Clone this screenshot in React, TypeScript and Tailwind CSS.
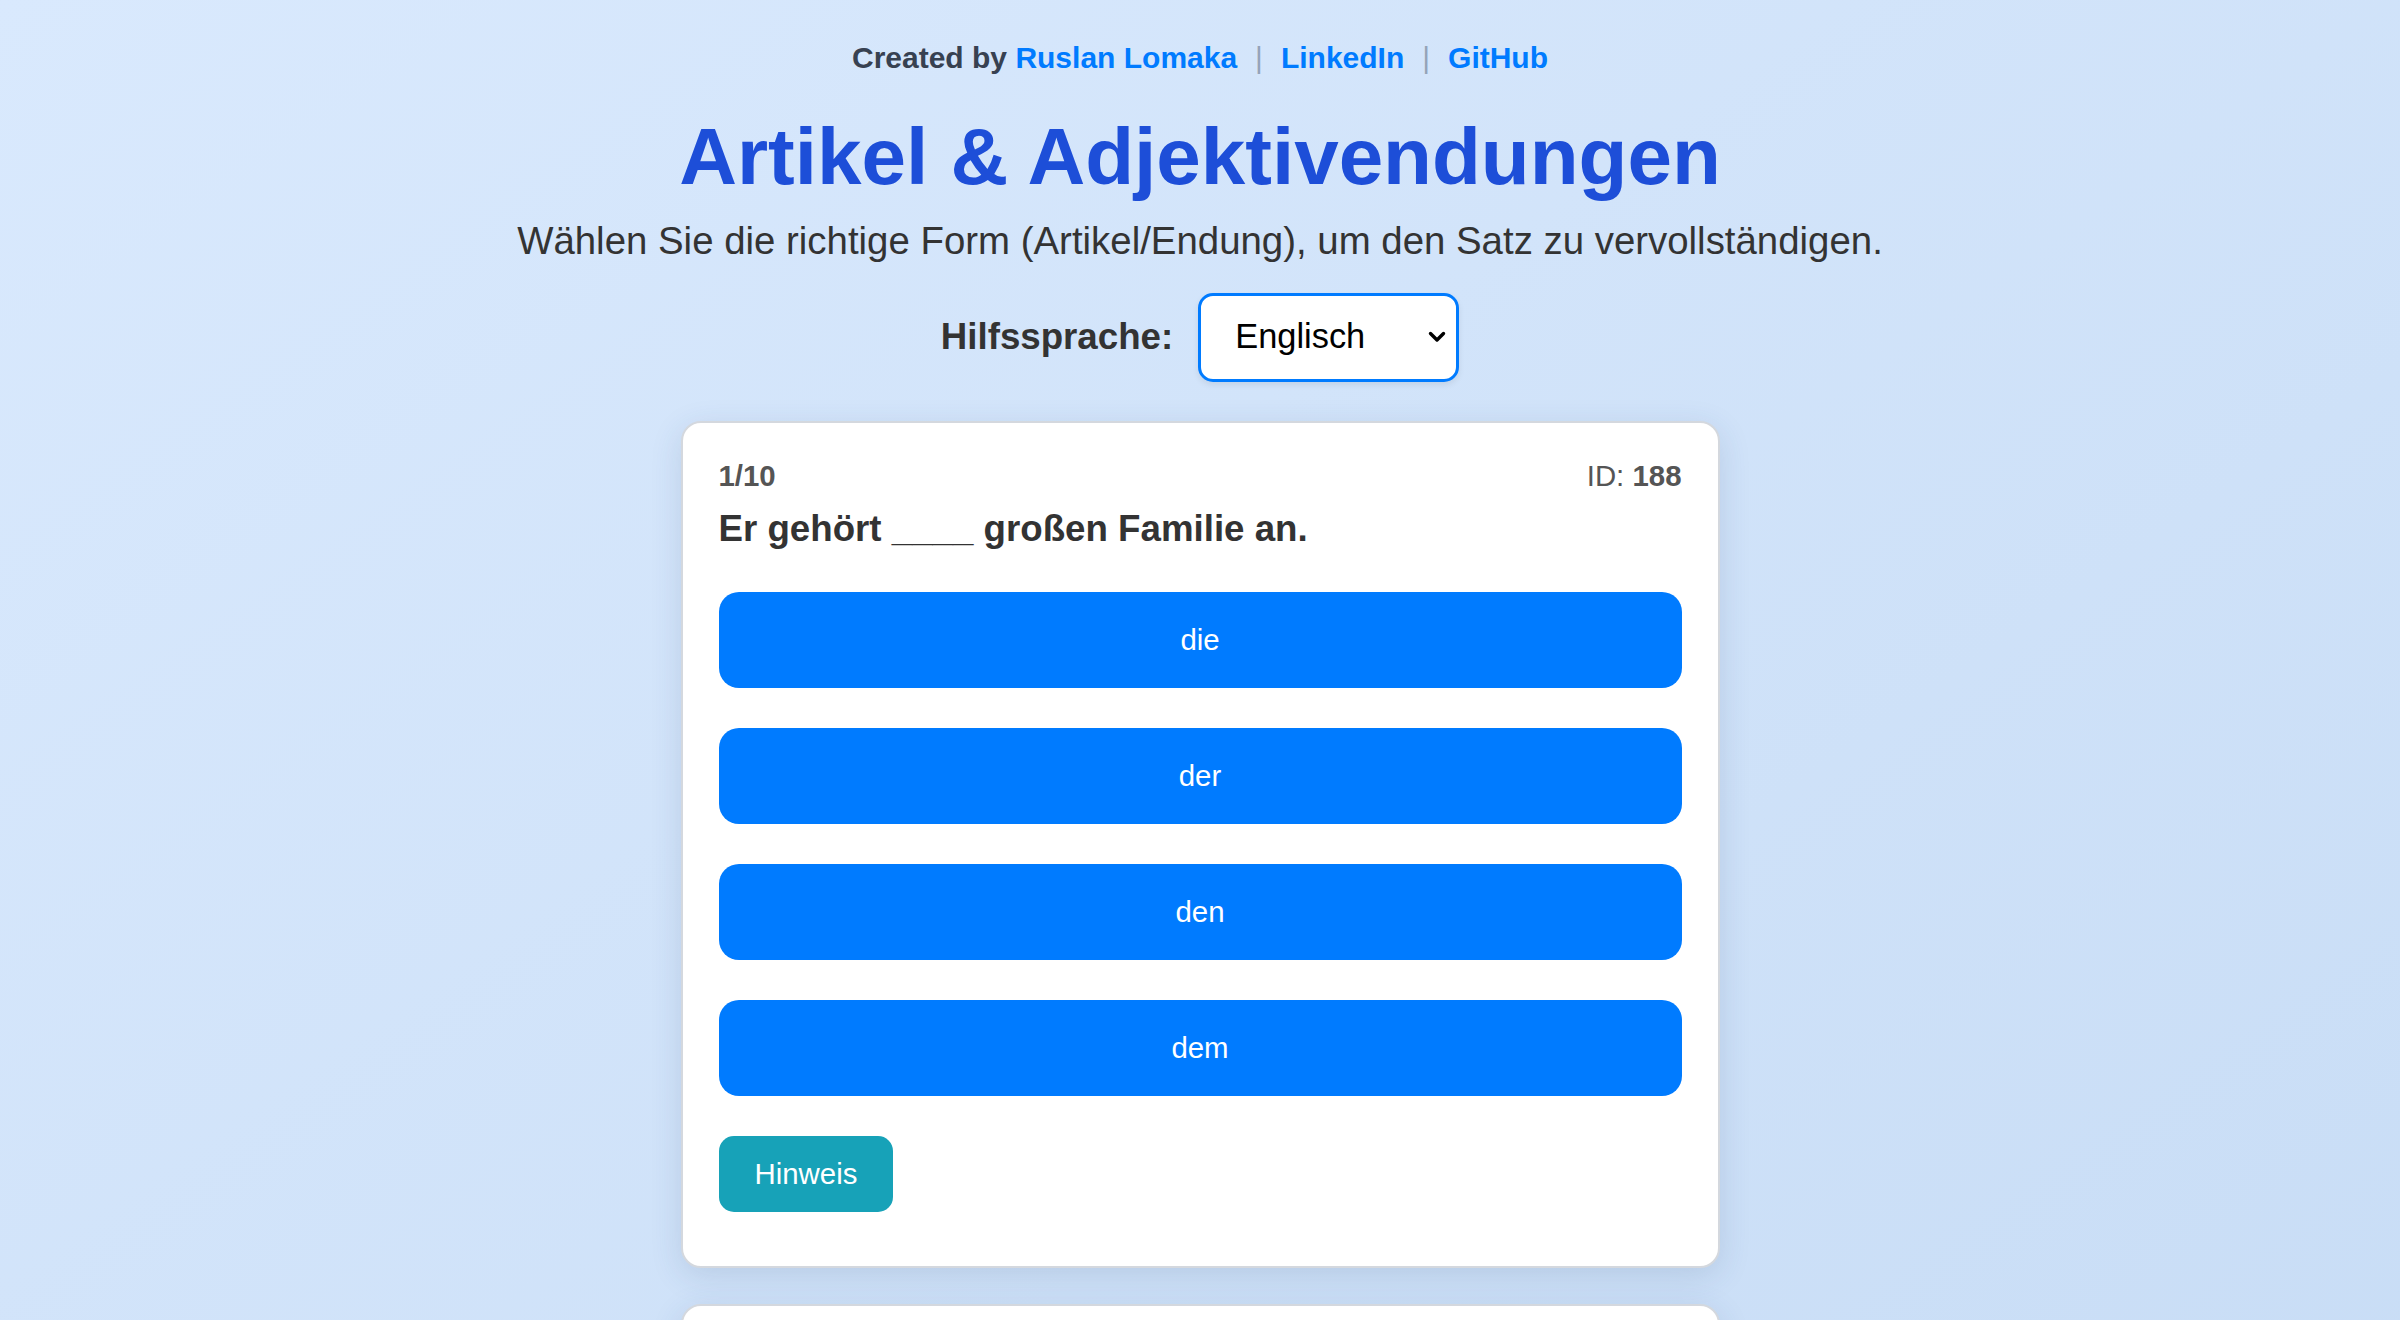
import React from "react";

const options = ["die", "der", "den", "dem"];

function Chevron() {
  return (
    <svg
      width="18"
      height="12"
      viewBox="0 0 18 12"
      className="pointer-events-none absolute right-[10px] top-1/2 -translate-y-1/2"
    >
      <path d="M2.5 2.5 L9 9 L15.5 2.5" fill="none" stroke="#000" strokeWidth="3.4" strokeLinecap="round" strokeLinejoin="round" />
    </svg>
  );
}

export default function App() {
  return (
    <div className="min-h-screen bg-linear-to-br from-[#d9e9fd] to-[#c7dcf5] pt-[41px] pb-16 font-['Liberation_Sans',Arial,sans-serif] text-[#333]">
      {/* Credits */}
      <p className="text-center text-[30px] font-bold leading-[1.15] text-[#374151]">
        Created by{" "}
        <a href="#" className="text-[#007bff]">
          Ruslan Lomaka
        </a>
        <span className="mx-[18px] font-normal text-[#94a3b8]">|</span>
        <a href="#" className="text-[#007bff]">
          LinkedIn
        </a>
        <span className="mx-[18px] font-normal text-[#94a3b8]">|</span>
        <a href="#" className="text-[#007bff]">
          GitHub
        </a>
      </p>

      <h1 className="mt-[35px] text-center text-[80px] font-bold leading-[1.15] text-[#1d4ed8]">
        Artikel &amp; Adjektivendungen
      </h1>
      <p className="mt-[16px] text-center text-[38.4px] leading-[1.15] text-[#333]">
        Wählen Sie die richtige Form (Artikel/Endung), um den Satz zu vervollständigen.
      </p>

      {/* Language picker */}
      <div className="mt-[30px] flex items-center justify-center gap-[25px]">
        <label className="text-[36.7px] font-bold leading-[1.15] text-[#333]">Hilfssprache:</label>
        <div className="relative h-[89px] w-[261px] rounded-[15px] border-[3px] border-[#007bff] bg-white shadow-[0_3px_6px_rgba(0,0,0,0.08)]">
          <select className="h-full w-full appearance-none rounded-[12px] bg-transparent pl-[34px] text-[34.4px] text-black outline-none">
            <option>Englisch</option>
            <option>Russisch</option>
            <option>Ukrainisch</option>
          </select>
          <Chevron />
        </div>
      </div>

      {/* Quiz card */}
      <div className="mx-auto mt-[39px] w-[1039px] rounded-[20px] border-2 border-[#d4d8de] bg-white px-[36px] pt-[36px] pb-[54px] shadow-[0_8px_32px_rgba(40,70,110,0.14)]">
        <div className="flex items-center justify-between text-[29.4px] leading-[1.15] text-[#555]">
          <span className="font-bold">1/10</span>
          <span>
            ID: <span className="font-bold">188</span>
          </span>
        </div>
        <p className="mt-[16px] text-[36.7px] font-bold leading-[1.15] text-[#333]">
          Er gehört ____ großen Familie an.
        </p>

        <div className="mt-[41px] flex flex-col gap-[40px]">
          {options.map((o) => (
            <button
              key={o}
              className="flex h-[96px] w-full items-center justify-center rounded-[20px] bg-[#007bff] text-[29.4px] text-white"
            >
              {o}
            </button>
          ))}
        </div>

        <button className="mt-[40px] flex h-[76px] items-center rounded-[15px] bg-[#17a2b8] px-[36px] text-[29.4px] text-white">
          Hinweis
        </button>
      </div>

      {/* Next card (below the fold) */}
      <div className="mx-auto mt-[36px] h-[300px] w-[1039px] rounded-[20px] border-2 border-[#d4d8de] bg-white shadow-[0_8px_32px_rgba(40,70,110,0.14)]" />
    </div>
  );
}
